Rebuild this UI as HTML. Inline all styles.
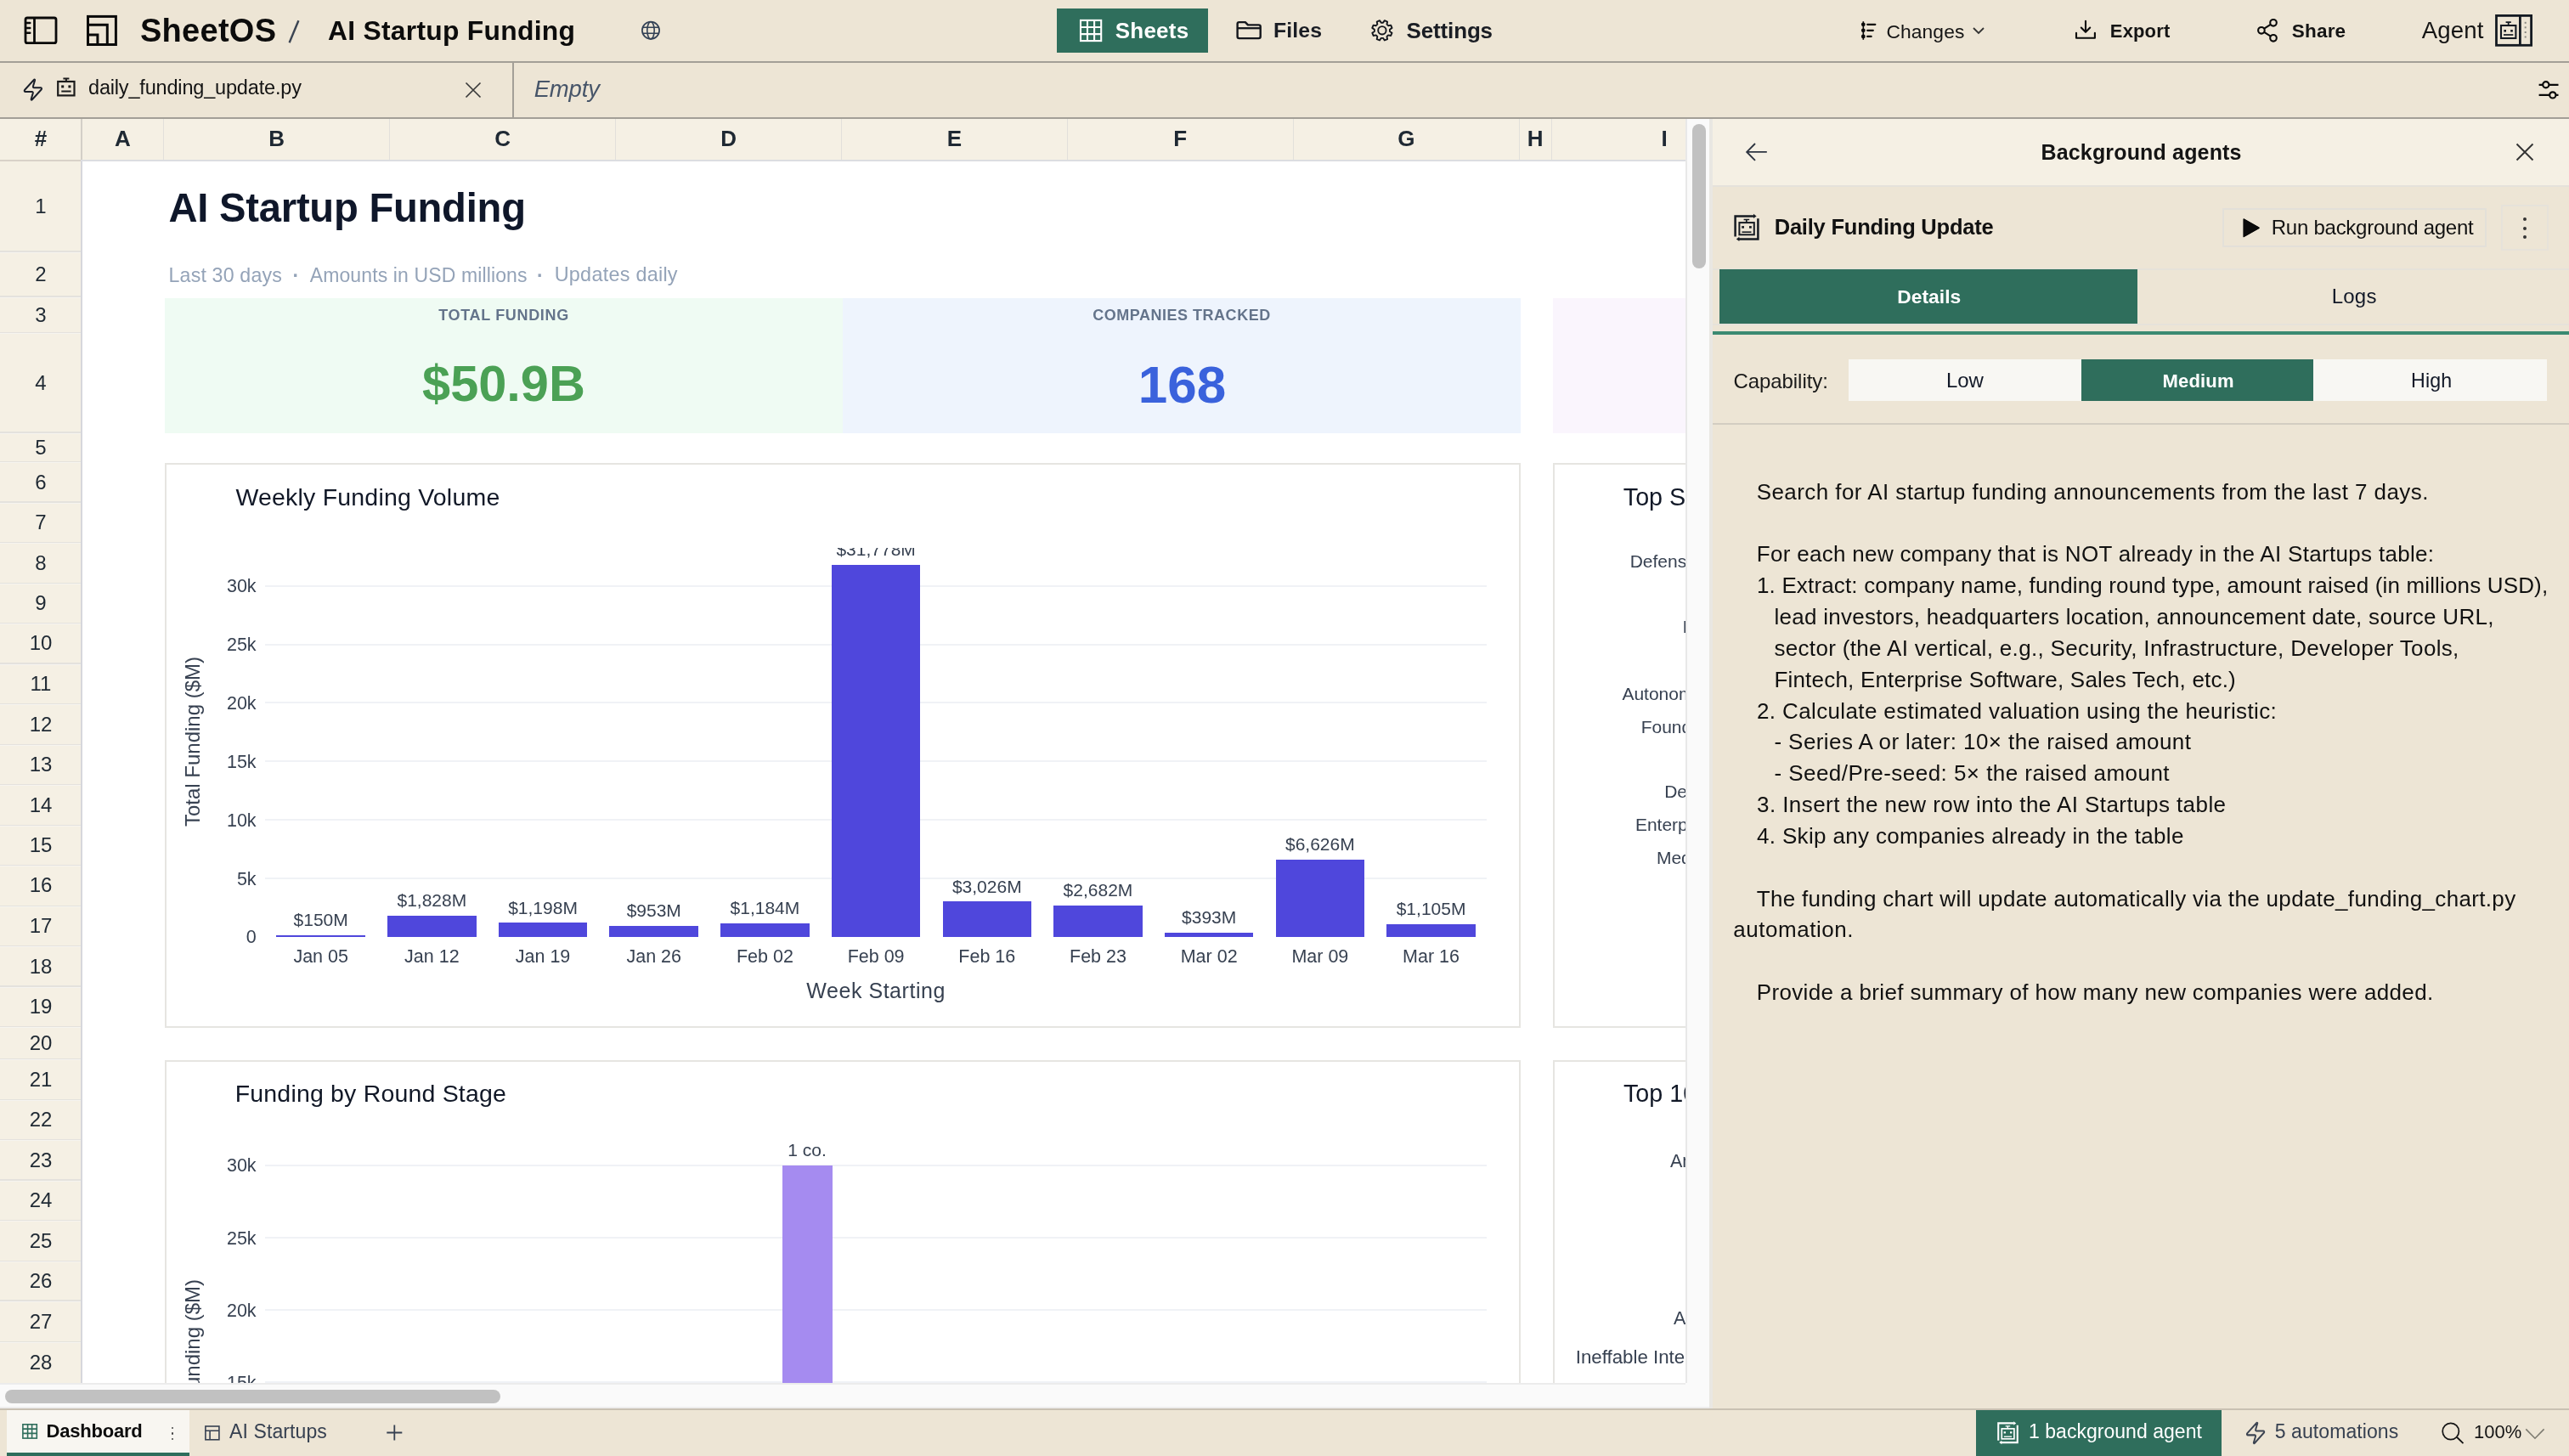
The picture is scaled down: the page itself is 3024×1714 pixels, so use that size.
<!DOCTYPE html>
<html><head><meta charset="utf-8"><title>SheetOS - AI Startup Funding</title>
<style>
html,body{margin:0;padding:0;width:3024px;height:1714px;overflow:hidden;background:#ede5d5;}
body{position:relative;font-family:"Liberation Sans", sans-serif;}
svg{display:block;}
</style></head><body><div style="position:absolute;left:0;top:0;width:3024px;height:1714px;overflow:hidden;will-change:transform;">
<div style="position:absolute;left:0.00px;top:0.00px;width:3024.00px;height:1714.00px;background:#ede5d5;"></div><div style="position:absolute;left:0.00px;top:72.00px;width:3024.00px;height:2.00px;background:#a39f97;"></div><div style="position:absolute;left:0.00px;top:138.00px;width:3024.00px;height:2.00px;background:#a39f97;"></div><div style="position:absolute;top:16.63px;font-size:38px;line-height:38px;font-weight:700;color:#0c0c0c;white-space:pre;letter-spacing:0.275px;left:165.00px;">SheetOS</div><div style="position:absolute;top:21.28px;font-size:31.8px;line-height:31.8px;font-weight:700;color:#0c0c0c;white-space:pre;letter-spacing:0.283px;left:386.00px;">AI Startup Funding</div><div style="position:absolute;left:1244.00px;top:10.00px;width:177.70px;height:51.70px;background:#2f6e5c;"></div><div style="position:absolute;top:23.19px;font-size:26px;line-height:26px;font-weight:700;color:#ffffff;white-space:pre;letter-spacing:0.243px;left:1312.70px;">Sheets</div><div style="position:absolute;top:24.21px;font-size:24.8px;line-height:24.8px;font-weight:700;color:#1a1d24;white-space:pre;letter-spacing:0.117px;left:1499.00px;">Files</div><div style="position:absolute;top:23.19px;font-size:26px;line-height:26px;font-weight:700;color:#1a1d24;white-space:pre;letter-spacing:-0.157px;left:1655.60px;">Settings</div><div style="position:absolute;top:25.70px;font-size:22.8px;line-height:22.8px;font-weight:400;color:#141414;white-space:pre;letter-spacing:0.093px;left:2220.50px;">Changes</div><div style="position:absolute;top:26.38px;font-size:22px;line-height:22px;font-weight:700;color:#141414;white-space:pre;letter-spacing:0.155px;left:2483.80px;">Export</div><div style="position:absolute;top:25.95px;font-size:22.5px;line-height:22.5px;font-weight:700;color:#141414;white-space:pre;letter-spacing:0.188px;left:2697.80px;">Share</div><div style="position:absolute;top:22.14px;font-size:27.6px;line-height:27.6px;font-weight:400;color:#141414;white-space:pre;letter-spacing:0.146px;left:2850.70px;">Agent</div><div style="position:absolute;top:91.91px;font-size:23.5px;line-height:23.5px;font-weight:400;color:#141414;white-space:pre;letter-spacing:-0.178px;left:104.00px;">daily_funding_update.py</div><div style="position:absolute;left:602.60px;top:74.00px;width:2.00px;height:64.00px;background:#a39f97;"></div><div style="position:absolute;top:90.72px;font-size:27.5px;line-height:27.5px;font-weight:400;color:#475569;white-space:pre;letter-spacing:-0.184px;left:628.70px;font-style:italic;">Empty</div><div style="position:absolute;left:0.00px;top:140.00px;width:1984.00px;height:48.00px;background:#f5f0e4;"></div><div style="position:absolute;left:0.00px;top:188.00px;width:1984.00px;height:2.00px;background:#dcdde1;"></div><div style="position:absolute;left:0.00px;top:190.00px;width:96.00px;height:1438.00px;background:#f5f0e4;"></div><div style="position:absolute;left:95.00px;top:190.00px;width:2.00px;height:1438.00px;background:#d6d7dc;"></div><div style="position:absolute;left:97.00px;top:190.00px;width:1887.00px;height:1438.00px;background:#ffffff;"></div><div style="position:absolute;left:95.00px;top:140.00px;width:2.00px;height:48.00px;background:#d3cfc7;"></div><div style="position:absolute;left:0.00px;top:188.00px;width:95.00px;height:2.00px;background:#d8d2c8;"></div><div style="position:absolute;left:0;top:0;width:1984px;height:190px;overflow:hidden"><div style="position:absolute;top:150.49px;font-size:26px;line-height:26px;font-weight:700;color:#1f2933;white-space:pre;left:-1952.00px;width:4000px;text-align:center;">#</div><div style="position:absolute;top:150.49px;font-size:26px;line-height:26px;font-weight:700;color:#1f2933;white-space:pre;left:-1855.65px;width:4000px;text-align:center;">A</div><div style="position:absolute;top:150.49px;font-size:26px;line-height:26px;font-weight:700;color:#1f2933;white-space:pre;left:-1674.40px;width:4000px;text-align:center;">B</div><div style="position:absolute;left:192.20px;top:140.00px;width:1.00px;height:48.00px;background:#e2e0db;"></div><div style="position:absolute;top:150.49px;font-size:26px;line-height:26px;font-weight:700;color:#1f2933;white-space:pre;left:-1408.35px;width:4000px;text-align:center;">C</div><div style="position:absolute;left:458.00px;top:140.00px;width:1.00px;height:48.00px;background:#e2e0db;"></div><div style="position:absolute;top:150.49px;font-size:26px;line-height:26px;font-weight:700;color:#1f2933;white-space:pre;left:-1142.25px;width:4000px;text-align:center;">D</div><div style="position:absolute;left:724.30px;top:140.00px;width:1.00px;height:48.00px;background:#e2e0db;"></div><div style="position:absolute;top:150.49px;font-size:26px;line-height:26px;font-weight:700;color:#1f2933;white-space:pre;left:-876.60px;width:4000px;text-align:center;">E</div><div style="position:absolute;left:990.20px;top:140.00px;width:1.00px;height:48.00px;background:#e2e0db;"></div><div style="position:absolute;top:150.49px;font-size:26px;line-height:26px;font-weight:700;color:#1f2933;white-space:pre;left:-610.75px;width:4000px;text-align:center;">F</div><div style="position:absolute;left:1255.60px;top:140.00px;width:1.00px;height:48.00px;background:#e2e0db;"></div><div style="position:absolute;top:150.49px;font-size:26px;line-height:26px;font-weight:700;color:#1f2933;white-space:pre;left:-344.70px;width:4000px;text-align:center;">G</div><div style="position:absolute;left:1521.90px;top:140.00px;width:1.00px;height:48.00px;background:#e2e0db;"></div><div style="position:absolute;top:150.49px;font-size:26px;line-height:26px;font-weight:700;color:#1f2933;white-space:pre;left:-192.90px;width:4000px;text-align:center;">H</div><div style="position:absolute;left:1787.70px;top:140.00px;width:1.00px;height:48.00px;background:#e2e0db;"></div><div style="position:absolute;top:150.49px;font-size:26px;line-height:26px;font-weight:700;color:#1f2933;white-space:pre;left:-41.00px;width:4000px;text-align:center;">I</div><div style="position:absolute;left:1825.50px;top:140.00px;width:1.00px;height:48.00px;background:#e2e0db;"></div></div><div style="position:absolute;top:231.28px;font-size:24px;line-height:24px;font-weight:400;color:#1f2933;white-space:pre;left:-1952.00px;width:4000px;text-align:center;">1</div><div style="position:absolute;left:0.00px;top:295.40px;width:95.00px;height:1.20px;background:#e4e2dd;"></div><div style="position:absolute;left:0.00px;top:296.60px;width:95.00px;height:0.80px;background:#f6f4ef;"></div><div style="position:absolute;top:310.78px;font-size:24px;line-height:24px;font-weight:400;color:#1f2933;white-space:pre;left:-1952.00px;width:4000px;text-align:center;">2</div><div style="position:absolute;left:0.00px;top:348.40px;width:95.00px;height:1.20px;background:#e4e2dd;"></div><div style="position:absolute;left:0.00px;top:349.60px;width:95.00px;height:0.80px;background:#f6f4ef;"></div><div style="position:absolute;top:358.53px;font-size:24px;line-height:24px;font-weight:400;color:#1f2933;white-space:pre;left:-1952.00px;width:4000px;text-align:center;">3</div><div style="position:absolute;left:0.00px;top:390.90px;width:95.00px;height:1.20px;background:#e4e2dd;"></div><div style="position:absolute;left:0.00px;top:392.10px;width:95.00px;height:0.80px;background:#f6f4ef;"></div><div style="position:absolute;top:438.53px;font-size:24px;line-height:24px;font-weight:400;color:#1f2933;white-space:pre;left:-1952.00px;width:4000px;text-align:center;">4</div><div style="position:absolute;left:0.00px;top:508.40px;width:95.00px;height:1.20px;background:#e4e2dd;"></div><div style="position:absolute;left:0.00px;top:509.60px;width:95.00px;height:0.80px;background:#f6f4ef;"></div><div style="position:absolute;top:514.53px;font-size:24px;line-height:24px;font-weight:400;color:#1f2933;white-space:pre;left:-1952.00px;width:4000px;text-align:center;">5</div><div style="position:absolute;left:0.00px;top:542.90px;width:95.00px;height:1.20px;background:#e4e2dd;"></div><div style="position:absolute;left:0.00px;top:544.10px;width:95.00px;height:0.80px;background:#f6f4ef;"></div><div style="position:absolute;top:555.53px;font-size:24px;line-height:24px;font-weight:400;color:#1f2933;white-space:pre;left:-1952.00px;width:4000px;text-align:center;">6</div><div style="position:absolute;left:0.00px;top:590.40px;width:95.00px;height:1.20px;background:#e4e2dd;"></div><div style="position:absolute;left:0.00px;top:591.60px;width:95.00px;height:0.80px;background:#f6f4ef;"></div><div style="position:absolute;top:603.13px;font-size:24px;line-height:24px;font-weight:400;color:#1f2933;white-space:pre;left:-1952.00px;width:4000px;text-align:center;">7</div><div style="position:absolute;left:0.00px;top:638.10px;width:95.00px;height:1.20px;background:#e4e2dd;"></div><div style="position:absolute;left:0.00px;top:639.30px;width:95.00px;height:0.80px;background:#f6f4ef;"></div><div style="position:absolute;top:650.93px;font-size:24px;line-height:24px;font-weight:400;color:#1f2933;white-space:pre;left:-1952.00px;width:4000px;text-align:center;">8</div><div style="position:absolute;left:0.00px;top:686.00px;width:95.00px;height:1.20px;background:#e4e2dd;"></div><div style="position:absolute;left:0.00px;top:687.20px;width:95.00px;height:0.80px;background:#f6f4ef;"></div><div style="position:absolute;top:698.18px;font-size:24px;line-height:24px;font-weight:400;color:#1f2933;white-space:pre;left:-1952.00px;width:4000px;text-align:center;">9</div><div style="position:absolute;left:0.00px;top:732.60px;width:95.00px;height:1.20px;background:#e4e2dd;"></div><div style="position:absolute;left:0.00px;top:733.80px;width:95.00px;height:0.80px;background:#f6f4ef;"></div><div style="position:absolute;top:745.38px;font-size:24px;line-height:24px;font-weight:400;color:#1f2933;white-space:pre;left:-1952.00px;width:4000px;text-align:center;">10</div><div style="position:absolute;left:0.00px;top:780.40px;width:95.00px;height:1.20px;background:#e4e2dd;"></div><div style="position:absolute;left:0.00px;top:781.60px;width:95.00px;height:0.80px;background:#f6f4ef;"></div><div style="position:absolute;top:792.98px;font-size:24px;line-height:24px;font-weight:400;color:#1f2933;white-space:pre;left:-1952.00px;width:4000px;text-align:center;">11</div><div style="position:absolute;left:0.00px;top:827.80px;width:95.00px;height:1.20px;background:#e4e2dd;"></div><div style="position:absolute;left:0.00px;top:829.00px;width:95.00px;height:0.80px;background:#f6f4ef;"></div><div style="position:absolute;top:840.83px;font-size:24px;line-height:24px;font-weight:400;color:#1f2933;white-space:pre;left:-1952.00px;width:4000px;text-align:center;">12</div><div style="position:absolute;left:0.00px;top:876.10px;width:95.00px;height:1.20px;background:#e4e2dd;"></div><div style="position:absolute;left:0.00px;top:877.30px;width:95.00px;height:0.80px;background:#f6f4ef;"></div><div style="position:absolute;top:888.48px;font-size:24px;line-height:24px;font-weight:400;color:#1f2933;white-space:pre;left:-1952.00px;width:4000px;text-align:center;">13</div><div style="position:absolute;left:0.00px;top:923.10px;width:95.00px;height:1.20px;background:#e4e2dd;"></div><div style="position:absolute;left:0.00px;top:924.30px;width:95.00px;height:0.80px;background:#f6f4ef;"></div><div style="position:absolute;top:935.83px;font-size:24px;line-height:24px;font-weight:400;color:#1f2933;white-space:pre;left:-1952.00px;width:4000px;text-align:center;">14</div><div style="position:absolute;left:0.00px;top:970.80px;width:95.00px;height:1.20px;background:#e4e2dd;"></div><div style="position:absolute;left:0.00px;top:972.00px;width:95.00px;height:0.80px;background:#f6f4ef;"></div><div style="position:absolute;top:983.08px;font-size:24px;line-height:24px;font-weight:400;color:#1f2933;white-space:pre;left:-1952.00px;width:4000px;text-align:center;">15</div><div style="position:absolute;left:0.00px;top:1017.60px;width:95.00px;height:1.20px;background:#e4e2dd;"></div><div style="position:absolute;left:0.00px;top:1018.80px;width:95.00px;height:0.80px;background:#f6f4ef;"></div><div style="position:absolute;top:1030.48px;font-size:24px;line-height:24px;font-weight:400;color:#1f2933;white-space:pre;left:-1952.00px;width:4000px;text-align:center;">16</div><div style="position:absolute;left:0.00px;top:1065.60px;width:95.00px;height:1.20px;background:#e4e2dd;"></div><div style="position:absolute;left:0.00px;top:1066.80px;width:95.00px;height:0.80px;background:#f6f4ef;"></div><div style="position:absolute;top:1078.28px;font-size:24px;line-height:24px;font-weight:400;color:#1f2933;white-space:pre;left:-1952.00px;width:4000px;text-align:center;">17</div><div style="position:absolute;left:0.00px;top:1113.20px;width:95.00px;height:1.20px;background:#e4e2dd;"></div><div style="position:absolute;left:0.00px;top:1114.40px;width:95.00px;height:0.80px;background:#f6f4ef;"></div><div style="position:absolute;top:1125.68px;font-size:24px;line-height:24px;font-weight:400;color:#1f2933;white-space:pre;left:-1952.00px;width:4000px;text-align:center;">18</div><div style="position:absolute;left:0.00px;top:1160.40px;width:95.00px;height:1.20px;background:#e4e2dd;"></div><div style="position:absolute;left:0.00px;top:1161.60px;width:95.00px;height:0.80px;background:#f6f4ef;"></div><div style="position:absolute;top:1173.08px;font-size:24px;line-height:24px;font-weight:400;color:#1f2933;white-space:pre;left:-1952.00px;width:4000px;text-align:center;">19</div><div style="position:absolute;left:0.00px;top:1208.00px;width:95.00px;height:1.20px;background:#e4e2dd;"></div><div style="position:absolute;left:0.00px;top:1209.20px;width:95.00px;height:0.80px;background:#f6f4ef;"></div><div style="position:absolute;top:1215.88px;font-size:24px;line-height:24px;font-weight:400;color:#1f2933;white-space:pre;left:-1952.00px;width:4000px;text-align:center;">20</div><div style="position:absolute;left:0.00px;top:1246.00px;width:95.00px;height:1.20px;background:#e4e2dd;"></div><div style="position:absolute;left:0.00px;top:1247.20px;width:95.00px;height:0.80px;background:#f6f4ef;"></div><div style="position:absolute;top:1258.73px;font-size:24px;line-height:24px;font-weight:400;color:#1f2933;white-space:pre;left:-1952.00px;width:4000px;text-align:center;">21</div><div style="position:absolute;left:0.00px;top:1293.70px;width:95.00px;height:1.20px;background:#e4e2dd;"></div><div style="position:absolute;left:0.00px;top:1294.90px;width:95.00px;height:0.80px;background:#f6f4ef;"></div><div style="position:absolute;top:1306.18px;font-size:24px;line-height:24px;font-weight:400;color:#1f2933;white-space:pre;left:-1952.00px;width:4000px;text-align:center;">22</div><div style="position:absolute;left:0.00px;top:1340.90px;width:95.00px;height:1.20px;background:#e4e2dd;"></div><div style="position:absolute;left:0.00px;top:1342.10px;width:95.00px;height:0.80px;background:#f6f4ef;"></div><div style="position:absolute;top:1353.53px;font-size:24px;line-height:24px;font-weight:400;color:#1f2933;white-space:pre;left:-1952.00px;width:4000px;text-align:center;">23</div><div style="position:absolute;left:0.00px;top:1388.40px;width:95.00px;height:1.20px;background:#e4e2dd;"></div><div style="position:absolute;left:0.00px;top:1389.60px;width:95.00px;height:0.80px;background:#f6f4ef;"></div><div style="position:absolute;top:1401.13px;font-size:24px;line-height:24px;font-weight:400;color:#1f2933;white-space:pre;left:-1952.00px;width:4000px;text-align:center;">24</div><div style="position:absolute;left:0.00px;top:1436.10px;width:95.00px;height:1.20px;background:#e4e2dd;"></div><div style="position:absolute;left:0.00px;top:1437.30px;width:95.00px;height:0.80px;background:#f6f4ef;"></div><div style="position:absolute;top:1448.93px;font-size:24px;line-height:24px;font-weight:400;color:#1f2933;white-space:pre;left:-1952.00px;width:4000px;text-align:center;">25</div><div style="position:absolute;left:0.00px;top:1484.00px;width:95.00px;height:1.20px;background:#e4e2dd;"></div><div style="position:absolute;left:0.00px;top:1485.20px;width:95.00px;height:0.80px;background:#f6f4ef;"></div><div style="position:absolute;top:1496.08px;font-size:24px;line-height:24px;font-weight:400;color:#1f2933;white-space:pre;left:-1952.00px;width:4000px;text-align:center;">26</div><div style="position:absolute;left:0.00px;top:1530.40px;width:95.00px;height:1.20px;background:#e4e2dd;"></div><div style="position:absolute;left:0.00px;top:1531.60px;width:95.00px;height:0.80px;background:#f6f4ef;"></div><div style="position:absolute;top:1543.53px;font-size:24px;line-height:24px;font-weight:400;color:#1f2933;white-space:pre;left:-1952.00px;width:4000px;text-align:center;">27</div><div style="position:absolute;left:0.00px;top:1578.90px;width:95.00px;height:1.20px;background:#e4e2dd;"></div><div style="position:absolute;left:0.00px;top:1580.10px;width:95.00px;height:0.80px;background:#f6f4ef;"></div><div style="position:absolute;top:1592.03px;font-size:24px;line-height:24px;font-weight:400;color:#1f2933;white-space:pre;left:-1952.00px;width:4000px;text-align:center;">28</div><div style="position:absolute;left:97px;top:190px;width:1887px;height:1438px;overflow:hidden"><div style="position:absolute;top:31.45px;font-size:47.2px;line-height:47.2px;font-weight:700;color:#0f172a;white-space:pre;letter-spacing:-0.244px;left:101.50px;">AI Startup Funding</div><div style="position:absolute;top:122.66px;font-size:23.2px;line-height:23.2px;font-weight:400;color:#94a3b8;white-space:pre;letter-spacing:0.170px;left:101.50px;">Last 30 days</div><div style="position:absolute;top:122.83px;font-size:23px;line-height:23px;font-weight:700;color:#94a3b8;white-space:pre;left:247.50px;">·</div><div style="position:absolute;top:122.83px;font-size:23px;line-height:23px;font-weight:400;color:#94a3b8;white-space:pre;letter-spacing:0.125px;left:267.70px;">Amounts in USD millions</div><div style="position:absolute;top:122.83px;font-size:23px;line-height:23px;font-weight:700;color:#94a3b8;white-space:pre;left:535.00px;">·</div><div style="position:absolute;top:122.49px;font-size:23.4px;line-height:23.4px;font-weight:400;color:#94a3b8;white-space:pre;letter-spacing:0.261px;left:555.70px;">Updates daily</div><div style="position:absolute;left:97.00px;top:161.00px;width:798.30px;height:158.50px;background:#effbf3;"></div><div style="position:absolute;left:895.30px;top:161.00px;width:797.70px;height:158.50px;background:#eef4fd;"></div><div style="position:absolute;left:1730.70px;top:161.00px;width:272.30px;height:158.50px;background:#faf5fd;"></div><div style="position:absolute;top:172.26px;font-size:18px;line-height:18px;font-weight:700;color:#64748b;white-space:pre;letter-spacing:0.670px;left:-1504.00px;width:4000px;text-align:center;">TOTAL FUNDING</div><div style="position:absolute;top:232.23px;font-size:59.5px;line-height:59.5px;font-weight:700;color:#4ba155;white-space:pre;left:-1504.00px;width:4000px;text-align:center;">$50.9B</div><div style="position:absolute;top:172.26px;font-size:18px;line-height:18px;font-weight:700;color:#64748b;white-space:pre;letter-spacing:0.511px;left:-706.00px;width:4000px;text-align:center;">COMPANIES TRACKED</div><div style="position:absolute;top:232.02px;font-size:62px;line-height:62px;font-weight:700;color:#3a62dc;white-space:pre;left:-705.50px;width:4000px;text-align:center;">168</div><div style="position:absolute;left:97.00px;top:355.00px;width:1596.00px;height:664.50px;background:#ffffff;box-sizing:border-box;border:2px solid #e6e5e1;"></div><div style="position:absolute;left:1731.00px;top:355.00px;width:572.00px;height:664.50px;background:#ffffff;box-sizing:border-box;border:2px solid #e6e5e1;"></div><div style="position:absolute;left:97.00px;top:1058.00px;width:1596.00px;height:552.00px;background:#ffffff;box-sizing:border-box;border:2px solid #e6e5e1;"></div><div style="position:absolute;left:1731.00px;top:1058.00px;width:572.00px;height:552.00px;background:#ffffff;box-sizing:border-box;border:2px solid #e6e5e1;"></div><div style="position:absolute;top:380.87px;font-size:28.5px;line-height:28.5px;font-weight:400;color:#111827;white-space:pre;letter-spacing:0.203px;left:180.40px;">Weekly Funding Volume</div><div style="position:absolute;top:903.40px;font-size:21.5px;line-height:21.5px;font-weight:400;color:#374151;white-space:pre;left:-3795.40px;width:4000px;text-align:right;">0</div><div style="position:absolute;left:215.30px;top:843.10px;width:1437.60px;height:2.00px;background:#f0f2f6;"></div><div style="position:absolute;top:834.50px;font-size:21.5px;line-height:21.5px;font-weight:400;color:#374151;white-space:pre;left:-3795.40px;width:4000px;text-align:right;">5k</div><div style="position:absolute;left:215.30px;top:774.20px;width:1437.60px;height:2.00px;background:#f0f2f6;"></div><div style="position:absolute;top:765.60px;font-size:21.5px;line-height:21.5px;font-weight:400;color:#374151;white-space:pre;left:-3795.40px;width:4000px;text-align:right;">10k</div><div style="position:absolute;left:215.30px;top:705.30px;width:1437.60px;height:2.00px;background:#f0f2f6;"></div><div style="position:absolute;top:696.70px;font-size:21.5px;line-height:21.5px;font-weight:400;color:#374151;white-space:pre;left:-3795.40px;width:4000px;text-align:right;">15k</div><div style="position:absolute;left:215.30px;top:636.40px;width:1437.60px;height:2.00px;background:#f0f2f6;"></div><div style="position:absolute;top:627.80px;font-size:21.5px;line-height:21.5px;font-weight:400;color:#374151;white-space:pre;left:-3795.40px;width:4000px;text-align:right;">20k</div><div style="position:absolute;left:215.30px;top:567.50px;width:1437.60px;height:2.00px;background:#f0f2f6;"></div><div style="position:absolute;top:558.90px;font-size:21.5px;line-height:21.5px;font-weight:400;color:#374151;white-space:pre;left:-3795.40px;width:4000px;text-align:right;">25k</div><div style="position:absolute;left:215.30px;top:498.60px;width:1437.60px;height:2.00px;background:#f0f2f6;"></div><div style="position:absolute;top:490.00px;font-size:21.5px;line-height:21.5px;font-weight:400;color:#374151;white-space:pre;left:-3795.40px;width:4000px;text-align:right;">30k</div><div style="position:absolute;left:97px;top:455px;width:1596px;height:564px;overflow:hidden"><div style="position:absolute;left:131.37px;top:455.93px;width:104.55px;height:2.07px;background:#4f47dc;"></div><div style="position:absolute;top:427.16px;font-size:21px;line-height:21px;font-weight:400;color:#374151;white-space:pre;left:-1816.35px;width:4000px;text-align:center;">$150M</div><div style="position:absolute;top:470.80px;font-size:21.5px;line-height:21.5px;font-weight:400;color:#374151;white-space:pre;left:-1816.35px;width:4000px;text-align:center;">Jan 05</div><div style="position:absolute;left:262.06px;top:432.81px;width:104.55px;height:25.19px;background:#4f47dc;"></div><div style="position:absolute;top:404.03px;font-size:21px;line-height:21px;font-weight:400;color:#374151;white-space:pre;left:-1685.66px;width:4000px;text-align:center;">$1,828M</div><div style="position:absolute;top:470.80px;font-size:21.5px;line-height:21.5px;font-weight:400;color:#374151;white-space:pre;left:-1685.66px;width:4000px;text-align:center;">Jan 12</div><div style="position:absolute;left:392.75px;top:441.49px;width:104.55px;height:16.51px;background:#4f47dc;"></div><div style="position:absolute;top:412.72px;font-size:21px;line-height:21px;font-weight:400;color:#374151;white-space:pre;left:-1554.97px;width:4000px;text-align:center;">$1,198M</div><div style="position:absolute;top:470.80px;font-size:21.5px;line-height:21.5px;font-weight:400;color:#374151;white-space:pre;left:-1554.97px;width:4000px;text-align:center;">Jan 19</div><div style="position:absolute;left:523.44px;top:444.87px;width:104.55px;height:13.13px;background:#4f47dc;"></div><div style="position:absolute;top:416.09px;font-size:21px;line-height:21px;font-weight:400;color:#374151;white-space:pre;left:-1424.28px;width:4000px;text-align:center;">$953M</div><div style="position:absolute;top:470.80px;font-size:21.5px;line-height:21.5px;font-weight:400;color:#374151;white-space:pre;left:-1424.28px;width:4000px;text-align:center;">Jan 26</div><div style="position:absolute;left:654.13px;top:441.68px;width:104.55px;height:16.32px;background:#4f47dc;"></div><div style="position:absolute;top:412.91px;font-size:21px;line-height:21px;font-weight:400;color:#374151;white-space:pre;left:-1293.59px;width:4000px;text-align:center;">$1,184M</div><div style="position:absolute;top:470.80px;font-size:21.5px;line-height:21.5px;font-weight:400;color:#374151;white-space:pre;left:-1293.59px;width:4000px;text-align:center;">Feb 02</div><div style="position:absolute;left:784.82px;top:20.10px;width:104.55px;height:437.90px;background:#4f47dc;"></div><div style="position:absolute;top:-8.68px;font-size:21px;line-height:21px;font-weight:400;color:#374151;white-space:pre;left:-1162.90px;width:4000px;text-align:center;">$31,778M</div><div style="position:absolute;top:470.80px;font-size:21.5px;line-height:21.5px;font-weight:400;color:#374151;white-space:pre;left:-1162.90px;width:4000px;text-align:center;">Feb 09</div><div style="position:absolute;left:915.51px;top:416.30px;width:104.55px;height:41.70px;background:#4f47dc;"></div><div style="position:absolute;top:387.53px;font-size:21px;line-height:21px;font-weight:400;color:#374151;white-space:pre;left:-1032.21px;width:4000px;text-align:center;">$3,026M</div><div style="position:absolute;top:470.80px;font-size:21.5px;line-height:21.5px;font-weight:400;color:#374151;white-space:pre;left:-1032.21px;width:4000px;text-align:center;">Feb 16</div><div style="position:absolute;left:1046.21px;top:421.04px;width:104.55px;height:36.96px;background:#4f47dc;"></div><div style="position:absolute;top:392.27px;font-size:21px;line-height:21px;font-weight:400;color:#374151;white-space:pre;left:-901.52px;width:4000px;text-align:center;">$2,682M</div><div style="position:absolute;top:470.80px;font-size:21.5px;line-height:21.5px;font-weight:400;color:#374151;white-space:pre;left:-901.52px;width:4000px;text-align:center;">Feb 23</div><div style="position:absolute;left:1176.90px;top:452.58px;width:104.55px;height:5.42px;background:#4f47dc;"></div><div style="position:absolute;top:423.81px;font-size:21px;line-height:21px;font-weight:400;color:#374151;white-space:pre;left:-770.83px;width:4000px;text-align:center;">$393M</div><div style="position:absolute;top:470.80px;font-size:21.5px;line-height:21.5px;font-weight:400;color:#374151;white-space:pre;left:-770.83px;width:4000px;text-align:center;">Mar 02</div><div style="position:absolute;left:1307.59px;top:366.69px;width:104.55px;height:91.31px;background:#4f47dc;"></div><div style="position:absolute;top:337.92px;font-size:21px;line-height:21px;font-weight:400;color:#374151;white-space:pre;left:-640.14px;width:4000px;text-align:center;">$6,626M</div><div style="position:absolute;top:470.80px;font-size:21.5px;line-height:21.5px;font-weight:400;color:#374151;white-space:pre;left:-640.14px;width:4000px;text-align:center;">Mar 09</div><div style="position:absolute;left:1438.28px;top:442.77px;width:104.55px;height:15.23px;background:#4f47dc;"></div><div style="position:absolute;top:414.00px;font-size:21px;line-height:21px;font-weight:400;color:#374151;white-space:pre;left:-509.45px;width:4000px;text-align:center;">$1,105M</div><div style="position:absolute;top:470.80px;font-size:21.5px;line-height:21.5px;font-weight:400;color:#374151;white-space:pre;left:-509.45px;width:4000px;text-align:center;">Mar 16</div><div style="position:absolute;top:508.84px;font-size:25px;line-height:25px;font-weight:400;color:#374151;white-space:pre;letter-spacing:0.536px;left:-1162.90px;width:4000px;text-align:center;">Week Starting</div></div><div style="position:absolute;left:-70px;top:668px;width:400px;height:30px;line-height:30px;text-align:center;font-size:24px;color:#374151;transform:rotate(-90deg);white-space:pre">Total Funding ($M)</div><div style="position:absolute;top:1083.07px;font-size:28.5px;line-height:28.5px;font-weight:400;color:#111827;white-space:pre;letter-spacing:0.184px;left:179.70px;">Funding by Round Stage</div><div style="position:absolute;left:215.00px;top:1436.30px;width:1437.90px;height:2.00px;background:#f0f2f6;"></div><div style="position:absolute;top:1427.70px;font-size:21.5px;line-height:21.5px;font-weight:400;color:#374151;white-space:pre;left:-3795.40px;width:4000px;text-align:right;">15k</div><div style="position:absolute;left:215.00px;top:1351.20px;width:1437.90px;height:2.00px;background:#f0f2f6;"></div><div style="position:absolute;top:1342.60px;font-size:21.5px;line-height:21.5px;font-weight:400;color:#374151;white-space:pre;left:-3795.40px;width:4000px;text-align:right;">20k</div><div style="position:absolute;left:215.00px;top:1266.10px;width:1437.90px;height:2.00px;background:#f0f2f6;"></div><div style="position:absolute;top:1257.50px;font-size:21.5px;line-height:21.5px;font-weight:400;color:#374151;white-space:pre;left:-3795.40px;width:4000px;text-align:right;">25k</div><div style="position:absolute;left:215.00px;top:1181.00px;width:1437.90px;height:2.00px;background:#f0f2f6;"></div><div style="position:absolute;top:1172.40px;font-size:21.5px;line-height:21.5px;font-weight:400;color:#374151;white-space:pre;left:-3795.40px;width:4000px;text-align:right;">30k</div><div style="position:absolute;left:823.90px;top:1182.30px;width:58.90px;height:327.70px;background:#a58bf0;"></div><div style="position:absolute;top:1153.22px;font-size:21px;line-height:21px;font-weight:400;color:#374151;white-space:pre;left:-1147.00px;width:4000px;text-align:center;">1 co.</div><div style="position:absolute;left:-70px;top:1401px;width:400px;height:30px;line-height:30px;text-align:center;font-size:24px;color:#374151;transform:rotate(-90deg);white-space:pre">Total Funding ($M)</div><div style="position:absolute;top:380.71px;font-size:28.7px;line-height:28.7px;font-weight:400;color:#111827;white-space:pre;left:1813.80px;">Top Sectors</div><div style="position:absolute;top:459.92px;font-size:21px;line-height:21px;font-weight:400;color:#374151;white-space:pre;left:1821.70px;">Defense Tech</div><div style="position:absolute;top:537.22px;font-size:21px;line-height:21px;font-weight:400;color:#374151;white-space:pre;left:1883.50px;">Infrastructure</div><div style="position:absolute;top:616.22px;font-size:21px;line-height:21px;font-weight:400;color:#374151;white-space:pre;left:1812.40px;">Autonomous Vehicles</div><div style="position:absolute;top:654.82px;font-size:21px;line-height:21px;font-weight:400;color:#374151;white-space:pre;left:1834.70px;">Foundation Models</div><div style="position:absolute;top:731.22px;font-size:21px;line-height:21px;font-weight:400;color:#374151;white-space:pre;left:1862.20px;">Developer Tools</div><div style="position:absolute;top:770.22px;font-size:21px;line-height:21px;font-weight:400;color:#374151;white-space:pre;left:1827.90px;">Enterprise Software</div><div style="position:absolute;top:809.22px;font-size:21px;line-height:21px;font-weight:400;color:#374151;white-space:pre;left:1852.90px;">Media</div><div style="position:absolute;top:1083.31px;font-size:28.7px;line-height:28.7px;font-weight:400;color:#111827;white-space:pre;left:1814.00px;">Top 10 Companies</div><div style="position:absolute;top:1167.30px;font-size:21.5px;line-height:21.5px;font-weight:400;color:#374151;white-space:pre;left:1869.00px;">Anthropic</div><div style="position:absolute;top:1351.80px;font-size:21.5px;line-height:21.5px;font-weight:400;color:#374151;white-space:pre;left:1873.00px;">Anysphere</div><div style="position:absolute;top:1396.92px;font-size:22.3px;line-height:22.3px;font-weight:400;color:#374151;white-space:pre;left:1757.70px;">Ineffable Intelligence</div></div><div style="position:absolute;left:1984.00px;top:140.00px;width:2.00px;height:1488.00px;background:#e8e8e8;"></div><div style="position:absolute;left:1986.00px;top:140.00px;width:26.00px;height:1488.00px;background:#fafafa;"></div><div style="position:absolute;left:1992.00px;top:146.00px;width:16.00px;height:170.00px;background:#c1c1c1;border-radius:8px;"></div><div style="position:absolute;left:0.00px;top:1628.00px;width:1984.00px;height:2.00px;background:#ececec;"></div><div style="position:absolute;left:0.00px;top:1630.00px;width:1984.00px;height:26.00px;background:#fafafa;"></div><div style="position:absolute;left:0.00px;top:1656.00px;width:2012.00px;height:2.00px;background:#ededed;"></div><div style="position:absolute;left:6.00px;top:1636.00px;width:582.60px;height:16.00px;background:#c1c1c1;border-radius:8px;"></div><div style="position:absolute;left:1984.00px;top:1628.00px;width:28.00px;height:28.00px;background:#fafafa;"></div><div style="position:absolute;left:2012.00px;top:140.00px;width:4.00px;height:1518.00px;background:#e9e7e2;"></div><div style="position:absolute;left:2016.00px;top:140.00px;width:1008.00px;height:78.00px;background:#f5f0e4;"></div><div style="position:absolute;left:2016.00px;top:218.00px;width:1008.00px;height:2.00px;background:#e5e2db;"></div><div style="position:absolute;top:166.64px;font-size:25px;line-height:25px;font-weight:700;color:#141414;white-space:pre;letter-spacing:0.164px;left:2402.50px;">Background agents</div><div style="position:absolute;top:254.91px;font-size:25.5px;line-height:25.5px;font-weight:700;color:#111111;white-space:pre;letter-spacing:-0.213px;left:2088.70px;">Daily Funding Update</div><div style="position:absolute;left:2615.50px;top:245.40px;width:311.50px;height:46.00px;background:transparent;box-sizing:border-box;border:2px solid #e3e0d9;"></div><div style="position:absolute;top:255.88px;font-size:24px;line-height:24px;font-weight:400;color:#111111;white-space:pre;letter-spacing:-0.260px;left:2673.80px;">Run background agent</div><div style="position:absolute;left:2944.00px;top:240.50px;width:56.00px;height:54.00px;background:transparent;box-sizing:border-box;border:2px solid #e6e2da;"></div><div style="position:absolute;left:2969.80px;top:256.00px;width:4.00px;height:4.00px;background:#333;border-radius:50%;"></div><div style="position:absolute;left:2969.80px;top:266.50px;width:4.00px;height:4.00px;background:#333;border-radius:50%;"></div><div style="position:absolute;left:2969.80px;top:277.00px;width:4.00px;height:4.00px;background:#333;border-radius:50%;"></div><div style="position:absolute;left:2016.00px;top:315.50px;width:1008.00px;height:2.00px;background:#e6e2da;"></div><div style="position:absolute;left:2016.00px;top:380.50px;width:1008.00px;height:2.00px;background:#e6e2da;"></div><div style="position:absolute;left:2024.00px;top:317.00px;width:492.00px;height:64.00px;background:#2f6e5c;"></div><div style="position:absolute;top:338.20px;font-size:22.8px;line-height:22.8px;font-weight:700;color:#ffffff;white-space:pre;letter-spacing:0.026px;left:2233.30px;">Details</div><div style="position:absolute;top:337.18px;font-size:24px;line-height:24px;font-weight:400;color:#111827;white-space:pre;letter-spacing:0.224px;left:2744.70px;">Logs</div><div style="position:absolute;left:2016.00px;top:390.00px;width:1008.00px;height:4.00px;background:#3b8a72;"></div><div style="position:absolute;top:436.68px;font-size:24px;line-height:24px;font-weight:400;color:#1a1a1a;white-space:pre;letter-spacing:-0.054px;left:2040.40px;">Capability:</div><div style="position:absolute;left:2175.80px;top:423.40px;width:822.20px;height:48.60px;background:#f8f7f3;"></div><div style="position:absolute;left:2449.70px;top:423.40px;width:273.20px;height:48.60px;background:#2f6e5c;"></div><div style="position:absolute;top:436.18px;font-size:24px;line-height:24px;font-weight:400;color:#111827;white-space:pre;letter-spacing:-0.106px;left:2291.00px;">Low</div><div style="position:absolute;top:437.88px;font-size:22px;line-height:22px;font-weight:700;color:#ffffff;white-space:pre;letter-spacing:0.147px;left:2545.60px;">Medium</div><div style="position:absolute;top:436.86px;font-size:23.2px;line-height:23.2px;font-weight:400;color:#111827;white-space:pre;letter-spacing:0.118px;left:2838.10px;">High</div><div style="position:absolute;left:2016.00px;top:497.50px;width:1008.00px;height:2.00px;background:#d3cdc2;"></div><div style="position:absolute;top:565.69px;font-size:26px;line-height:26px;font-weight:400;color:#111111;white-space:pre;letter-spacing:0.431px;left:2067.70px;">Search for AI startup funding announcements from the last 7 days.</div><div style="position:absolute;top:639.37px;font-size:26px;line-height:26px;font-weight:400;color:#111111;white-space:pre;letter-spacing:0.313px;left:2067.70px;">For each new company that is NOT already in the AI Startups table:</div><div style="position:absolute;top:676.21px;font-size:26px;line-height:26px;font-weight:400;color:#111111;white-space:pre;letter-spacing:0.156px;left:2068.00px;">1. Extract: company name, funding round type, amount raised (in millions USD),</div><div style="position:absolute;top:713.05px;font-size:26px;line-height:26px;font-weight:400;color:#111111;white-space:pre;letter-spacing:0.277px;left:2088.40px;">lead investors, headquarters location, announcement date, source URL,</div><div style="position:absolute;top:749.89px;font-size:26px;line-height:26px;font-weight:400;color:#111111;white-space:pre;letter-spacing:0.329px;left:2088.40px;">sector (the AI vertical, e.g., Security, Infrastructure, Developer Tools,</div><div style="position:absolute;top:786.73px;font-size:26px;line-height:26px;font-weight:400;color:#111111;white-space:pre;letter-spacing:0.199px;left:2088.40px;">Fintech, Enterprise Software, Sales Tech, etc.)</div><div style="position:absolute;top:823.57px;font-size:26px;line-height:26px;font-weight:400;color:#111111;white-space:pre;letter-spacing:0.370px;left:2068.00px;">2. Calculate estimated valuation using the heuristic:</div><div style="position:absolute;top:860.41px;font-size:26px;line-height:26px;font-weight:400;color:#111111;white-space:pre;letter-spacing:0.421px;left:2088.40px;">- Series A or later: 10× the raised amount</div><div style="position:absolute;top:897.25px;font-size:26px;line-height:26px;font-weight:400;color:#111111;white-space:pre;letter-spacing:0.456px;left:2088.40px;">- Seed/Pre-seed: 5× the raised amount</div><div style="position:absolute;top:934.09px;font-size:26px;line-height:26px;font-weight:400;color:#111111;white-space:pre;letter-spacing:0.430px;left:2068.00px;">3. Insert the new row into the AI Startups table</div><div style="position:absolute;top:970.93px;font-size:26px;line-height:26px;font-weight:400;color:#111111;white-space:pre;letter-spacing:0.338px;left:2068.00px;">4. Skip any companies already in the table</div><div style="position:absolute;top:1044.61px;font-size:26px;line-height:26px;font-weight:400;color:#111111;white-space:pre;letter-spacing:0.335px;left:2067.70px;">The funding chart will update automatically via the update_funding_chart.py</div><div style="position:absolute;top:1081.45px;font-size:26px;line-height:26px;font-weight:400;color:#111111;white-space:pre;letter-spacing:0.531px;left:2040.30px;">automation.</div><div style="position:absolute;top:1155.13px;font-size:26px;line-height:26px;font-weight:400;color:#111111;white-space:pre;letter-spacing:0.366px;left:2067.70px;">Provide a brief summary of how many new companies were added.</div><div style="position:absolute;left:0.00px;top:1658.00px;width:3024.00px;height:2.00px;background:#c9c1b3;"></div><div style="position:absolute;left:8.00px;top:1660.00px;width:215.00px;height:54.00px;background:#f8f6f1;"></div><div style="position:absolute;left:8.00px;top:1710.00px;width:215.00px;height:4.00px;background:#2f6e5c;"></div><div style="position:absolute;top:1674.38px;font-size:22px;line-height:22px;font-weight:700;color:#0d0d0d;white-space:pre;letter-spacing:-0.208px;left:54.50px;">Dashboard</div><div style="position:absolute;left:201.50px;top:1679.70px;width:2.60px;height:2.60px;background:#444;border-radius:50%;"></div><div style="position:absolute;left:201.50px;top:1686.20px;width:2.60px;height:2.60px;background:#444;border-radius:50%;"></div><div style="position:absolute;left:201.50px;top:1692.70px;width:2.60px;height:2.60px;background:#444;border-radius:50%;"></div><div style="position:absolute;top:1674.03px;font-size:23px;line-height:23px;font-weight:400;color:#374151;white-space:pre;letter-spacing:0.106px;left:270.00px;">AI Startups</div><div style="position:absolute;left:2326.00px;top:1660.00px;width:288.80px;height:54.00px;background:#2f6e5c;"></div><div style="position:absolute;top:1674.03px;font-size:23px;line-height:23px;font-weight:400;color:#ffffff;white-space:pre;letter-spacing:0.030px;left:2388.00px;">1 background agent</div><div style="position:absolute;top:1674.03px;font-size:23px;line-height:23px;font-weight:400;color:#374151;white-space:pre;letter-spacing:0.088px;left:2677.70px;">5 automations</div><div style="position:absolute;top:1674.88px;font-size:22px;line-height:22px;font-weight:400;color:#141414;white-space:pre;letter-spacing:0.026px;left:2912.00px;">100%</div><svg style="position:absolute;left:0;top:0" width="3024" height="1714" viewBox="0 0 3024 1714" fill="none"><rect x="30" y="21" width="36" height="29.6" rx="2.2" stroke="#0a0a0a" stroke-width="2.8"/><line x1="40.5" y1="21" x2="40.5" y2="50.6" stroke="#0a0a0a" stroke-width="2.8"/><line x1="30.5" y1="27" x2="35.3" y2="27" stroke="#0a0a0a" stroke-width="2.4" stroke-linecap="round"/><line x1="30.5" y1="33" x2="35.3" y2="33" stroke="#0a0a0a" stroke-width="2.4" stroke-linecap="round"/><line x1="30.5" y1="38.8" x2="35.3" y2="38.8" stroke="#0a0a0a" stroke-width="2.4" stroke-linecap="round"/><line x1="340.6" y1="50.3" x2="351.4" y2="24.2" stroke="#3b4452" stroke-width="2.4"/><rect x="103.5" y="19.4" width="32.9" height="33.1" stroke="#0a0a0a" stroke-width="3"/><path d="M103.5 29.2 H126.3 V52.5 M103.5 41.1 H114.9 V52.5" stroke="#0a0a0a" stroke-width="3"/><circle cx="766" cy="35.8" r="10.1" stroke="#334155" stroke-width="1.7"/><ellipse cx="766" cy="35.8" rx="4.2" ry="10.1" stroke="#334155" stroke-width="1.6"/><path d="M756.5 32.2 H775.5 M756.5 39.3 H775.5" stroke="#334155" stroke-width="1.6"/><rect x="1272" y="23.9" width="24.2" height="24.2" stroke="#fff" stroke-width="2.1"/><path d="M1280 23.9 V48.1 M1288.1 23.9 V48.1 M1272 32 H1296.2 M1272 40.1 H1296.2" stroke="#fff" stroke-width="2.1"/><path d="M1456.6 28.1 Q1456.6 26.1 1458.6 26.1 H1465.8 L1469 29.4 H1481.6 Q1483.7 29.4 1483.7 31.4 V43.1 Q1483.7 45.1 1481.6 45.1 H1458.6 Q1456.6 45.1 1456.6 43.1 Z" stroke="#14171d" stroke-width="2.4" stroke-linejoin="round"/><line x1="1456.6" y1="33.2" x2="1483.7" y2="33.2" stroke="#14171d" stroke-width="2.3"/><path d="M1628.01 26.77 L1629.80 24.16 L1633.08 25.51 L1632.50 28.63 L1634.07 30.20 L1637.19 29.62 L1638.54 32.90 L1635.93 34.69 L1635.93 36.91 L1638.54 38.70 L1637.19 41.98 L1634.07 41.40 L1632.50 42.97 L1633.08 46.09 L1629.80 47.44 L1628.01 44.83 L1625.79 44.83 L1624.00 47.44 L1620.72 46.09 L1621.30 42.97 L1619.73 41.40 L1616.61 41.98 L1615.26 38.70 L1617.87 36.91 L1617.87 34.69 L1615.26 32.90 L1616.61 29.62 L1619.73 30.20 L1621.30 28.63 L1620.72 25.51 L1624.00 24.16 L1625.79 26.77 Z" stroke="#14171d" stroke-width="1.9" stroke-linejoin="round"/><circle cx="1626.9" cy="35.8" r="4.7" stroke="#14171d" stroke-width="1.9"/><line x1="2193.3" y1="25.2" x2="2193.3" y2="46.8" stroke="#0a0a0a" stroke-width="1.6"/><circle cx="2193.3" cy="28.8" r="2.4" fill="#0a0a0a"/><circle cx="2193.3" cy="35.8" r="2.4" fill="#0a0a0a"/><circle cx="2193.3" cy="42.9" r="2.4" fill="#0a0a0a"/><path d="M2198.2 28.8 H2207.3 M2198.2 35.8 H2204.8 M2198.2 42.9 H2202.6" stroke="#0a0a0a" stroke-width="2.3" stroke-linecap="round"/><path d="M2323 33 L2329 39 L2335 33" stroke="#333" stroke-width="1.8"/><path d="M2455 24.7 V37.5 M2449.8 32.6 L2455 37.8 L2460.2 32.6 M2444 38.8 V44.7 H2465.9 V38.8" stroke="#0a0a0a" stroke-width="2.1" stroke-linecap="round" stroke-linejoin="round"/><circle cx="2676" cy="26.8" r="3.8" stroke="#0a0a0a" stroke-width="2.1"/><circle cx="2661.9" cy="35.8" r="3.8" stroke="#0a0a0a" stroke-width="2.1"/><circle cx="2676" cy="44.8" r="3.8" stroke="#0a0a0a" stroke-width="2.1"/><path d="M2665.2 33.7 L2672.7 28.9 M2665.2 37.9 L2672.7 42.7" stroke="#0a0a0a" stroke-width="2.1"/><rect x="2938.5" y="18.4" width="41.1" height="34.9" stroke="#141a22" stroke-width="2.8"/><line x1="2966.4" y1="18.4" x2="2966.4" y2="53.3" stroke="#141a22" stroke-width="2.8"/><rect x="2944" y="30" width="17.4" height="15" stroke="#141a22" stroke-width="2.1"/><path d="M2952.7 26 V30 M2949.6 26.2 H2955.8" stroke="#141a22" stroke-width="1.8"/><rect x="2947.4" y="35" width="2.6" height="2.6" fill="#141a22"/><rect x="2955.2" y="35" width="2.6" height="2.6" fill="#141a22"/><line x1="2947" y1="41" x2="2958.3" y2="41" stroke="#141a22" stroke-width="1.7"/><rect x="2971.7" y="25.8" width="2" height="2" fill="#8c8a84"/><rect x="2971.7" y="31.299999999999997" width="2" height="2" fill="#8c8a84"/><rect x="2971.7" y="37" width="2" height="2" fill="#8c8a84"/><rect x="2971.7" y="42.5" width="2" height="2" fill="#8c8a84"/><g transform="translate(25.3 91.2) scale(1.13 1.2)"><path d="M4 14a1 1 0 0 1-.78-1.63l9.9-10.2a.5.5 0 0 1 .86.46l-1.92 6.02A1 1 0 0 0 13 10h7a1 1 0 0 1 .78 1.63l-9.9 10.2a.5.5 0 0 1-.86-.46l1.92-6.02A1 1 0 0 0 11 14z" stroke="#1a1f29" stroke-width="1.75" stroke-linejoin="round"/></g><rect x="68.2" y="96" width="19.3" height="16.4" stroke="#1c1c1c" stroke-width="2.2"/><path d="M77.9 91.8 V96 M74.4 92.6 H81.4" stroke="#1c1c1c" stroke-width="2"/><rect x="72.2" y="100.4" width="3" height="3" fill="#1c1c1c"/><rect x="80.4" y="100.4" width="3" height="3" fill="#1c1c1c"/><line x1="72.3" y1="107.5" x2="83.6" y2="107.5" stroke="#1c1c1c" stroke-width="2"/><path d="M548.5 97.5 L565.5 114.5 M565.5 97.5 L548.5 114.5" stroke="#3a3a3a" stroke-width="1.7"/><path d="M2988.6 99.8 H2993 M3000.6 99.8 H3011.5 M2988.6 111.9 H3001 M3008.6 111.9 H3011.5" stroke="#0a0a0a" stroke-width="2.2"/><circle cx="2996.8" cy="99.8" r="3.6" stroke="#0a0a0a" stroke-width="2.2"/><circle cx="3004.8" cy="111.9" r="3.6" stroke="#0a0a0a" stroke-width="2.2"/><path d="M2079.8 178.9 H2057 M2066 169 L2056.2 178.9 L2066 188.8" stroke="#2d3440" stroke-width="1.9"/><path d="M2962.5 169.5 L2981.5 188.5 M2981.5 169.5 L2962.5 188.5" stroke="#333" stroke-width="1.9"/><path d="M2042.60 278.60 L2042.60 254.40 L2064.60 254.40" stroke="#161b22" stroke-width="2.50" fill="none"/><path d="M2064.00 251.70 L2067.60 254.40 L2064.00 257.10 Z" fill="#161b22"/><path d="M2069.40 257.20 L2069.40 281.40 L2047.00 281.40" stroke="#161b22" stroke-width="2.50" fill="none"/><path d="M2047.40 278.70 L2043.80 281.40 L2047.40 284.10 Z" fill="#161b22"/><rect x="2047.40" y="262.10" width="17.40" height="14.20" stroke="#161b22" stroke-width="2.00" fill="none"/><path d="M2055.80 258.50 L2055.80 262.10 M2052.60 258.50 L2059.20 258.50" stroke="#161b22" stroke-width="1.70" fill="none"/><rect x="2050.20" y="266.10" width="2.80" height="2.60" fill="#161b22"/><rect x="2059.00" y="266.10" width="2.80" height="2.60" fill="#161b22"/><path d="M2050.50 273.20 L2061.50 273.20" stroke="#161b22" stroke-width="1.60" fill="none"/><path d="M2641.5 258.5 Q2640.2 257.4 2641.2 257.2 L2658.8 267.2 Q2660 268.2 2658.8 269.2 L2641.2 279.3 Q2640.2 279.4 2641.5 278 Z" fill="#0b0b0b"/><path d="M2641 258 L2659.3 268.2 L2641 278.6 Z" fill="#0b0b0b" stroke="#0b0b0b" stroke-width="1.2" stroke-linejoin="round"/><rect x="26.9" y="1676.8" width="16.4" height="16.3" stroke="#2f6e5c" stroke-width="1.6"/><path d="M32.6 1676.8 V1693.1 M37.6 1676.8 V1693.1 M26.9 1682.1 H43.3 M26.9 1687.4 H43.3" stroke="#2f6e5c" stroke-width="1.6"/><rect x="241.9" y="1679" width="16" height="15.8" stroke="#374151" stroke-width="1.6"/><path d="M241.9 1684.2 H257.9 M247.1 1684.2 V1694.8" stroke="#374151" stroke-width="1.6"/><path d="M464.3 1677.5 V1695.5 M455.3 1686.5 H473.3" stroke="#374151" stroke-width="1.8"/><path d="M2352.24 1695.74 L2352.24 1675.42 L2370.72 1675.42" stroke="#ffffff" stroke-width="2.10" fill="none"/><path d="M2370.22 1673.15 L2373.24 1675.42 L2370.22 1677.68 Z" fill="#ffffff"/><path d="M2374.76 1677.77 L2374.76 1698.10 L2355.94 1698.10" stroke="#ffffff" stroke-width="2.10" fill="none"/><path d="M2356.28 1695.83 L2353.25 1698.10 L2356.28 1700.36 Z" fill="#ffffff"/><rect x="2356.28" y="1681.88" width="14.62" height="11.93" stroke="#ffffff" stroke-width="1.68" fill="none"/><path d="M2363.33 1678.86 L2363.33 1681.88 M2360.64 1678.86 L2366.19 1678.86" stroke="#ffffff" stroke-width="1.43" fill="none"/><rect x="2358.63" y="1685.24" width="2.35" height="2.18" fill="#ffffff"/><rect x="2366.02" y="1685.24" width="2.35" height="2.18" fill="#ffffff"/><path d="M2358.88 1691.21 L2368.12 1691.21" stroke="#ffffff" stroke-width="1.34" fill="none"/><g transform="translate(2641.5 1672.3) scale(1.13 1.22)"><path d="M4 14a1 1 0 0 1-.78-1.63l9.9-10.2a.5.5 0 0 1 .86.46l-1.92 6.02A1 1 0 0 0 13 10h7a1 1 0 0 1 .78 1.63l-9.9 10.2a.5.5 0 0 1-.86-.46l1.92-6.02A1 1 0 0 0 11 14z" stroke="#3a4250" stroke-width="1.7" stroke-linejoin="round"/></g><circle cx="2884.8" cy="1685" r="9.6" stroke="#141414" stroke-width="1.7"/><path d="M2892.2 1692 L2899.5 1699.2" stroke="#141414" stroke-width="1.8"/><path d="M2973.3 1682.4 L2984 1693.2 L2994.6 1682.4" stroke="#7d7b70" stroke-width="1.6"/></svg>
</div></body></html>
